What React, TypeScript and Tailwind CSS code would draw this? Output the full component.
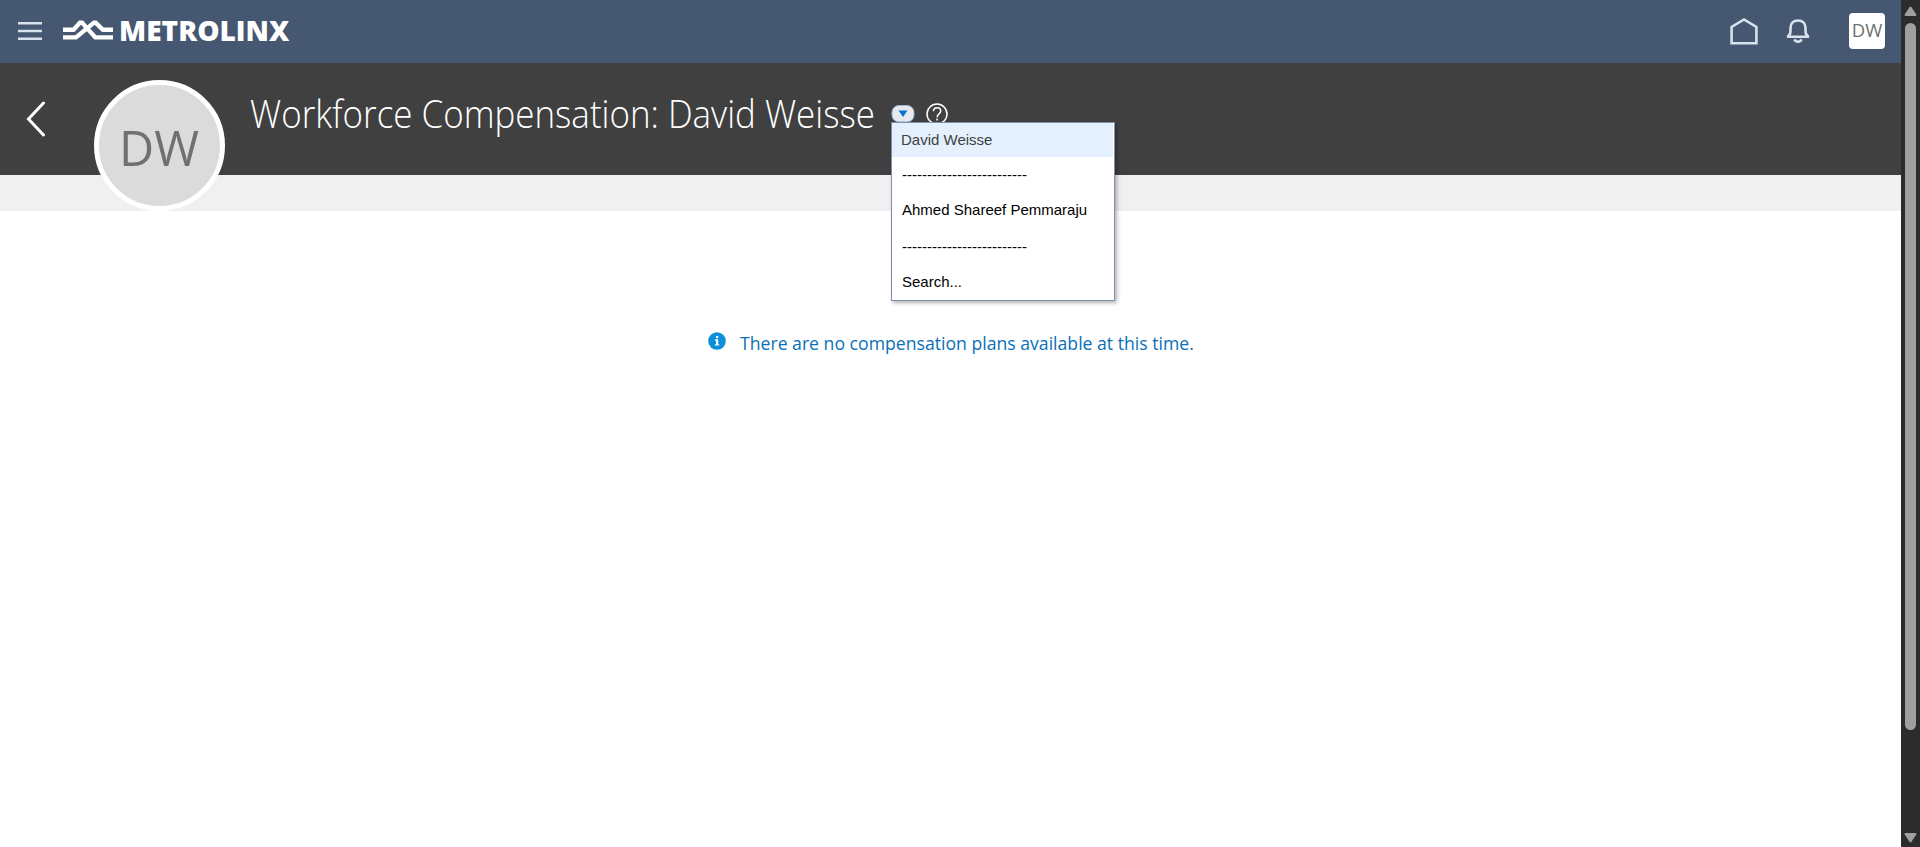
function Logo() {
  return (
    <div className="flex items-center">
      <svg width="50" height="22" viewBox="0 0 50 22" fill="none" stroke="#fff" strokeWidth="4.4" className="-mt-px ml-[21px]">
        <path d="M0 10.800h10.500L17 3.600h2L32.300 18.400H50" />
        <path d="M0 18.400h13L31 3.600h1.600l7.400 7.200H50" />
      </svg>
      <span className="-mt-[2px] ml-[6px] w-[180px] origin-left scale-x-[0.985] whitespace-nowrap font-['Open_Sans'] text-[28.5px] leading-[30px] font-extrabold text-white">
        METROLINX
      </span>
    </div>
  );
}

function TopBar() {
  return (
    <header className="flex h-[63px] items-start bg-[#465771]">
      <div className="flex h-[61px] items-center pl-[18px]">
        <svg width="24" height="20" viewBox="0 0 24 20" fill="#d8e2ee">
          <path d="M0 1h24v2.500H0zM0 8.800h24v2.400H0zM0 16.500h24v2.500H0z" />
        </svg>
        <Logo />
      </div>
      <div className="ml-auto flex h-[62px] items-center pr-4">
        <svg width="28" height="28" viewBox="0 0 28 28" fill="none" stroke="#d8e2ee" strokeWidth="2.600">
          <path d="M1.600 26.200V10L14 2.400l12.400 7.600v16.200z" />
        </svg>
        <svg width="24" height="28" viewBox="0 0 24 28" fill="none" stroke="#d8e2ee" strokeWidth="2.600" className="ml-[28px]">
          <path d="M2.200 19.800h19.600v-.8c-1.600-1-2.300-2.400-2.300-5V11c0-5-3-7.500-7.500-7.500S4.500 6 4.500 11v3c0 2.600-.7 4-2.300 5z" />
          <path d="M8.400 22.400c.8 1.700 1.900 2.300 3.600 2.300s2.800-.6 3.600-2.300" />
        </svg>
        <div className="ml-[39px] flex size-9 items-center justify-center rounded-[4px] bg-white pb-px font-['Open_Sans'] text-[18.500px] leading-none text-[#707070]">
          DW
        </div>
      </div>
    </header>
  );
}

function PersonMenu() {
  const row = "flex items-center pl-[10px]";
  return (
    <div className="absolute top-[59px] left-[891px] z-20 h-[179px] w-[224px] border border-[#7a93a8] bg-white font-['Liberation_Sans'] text-[15px] leading-[18px] whitespace-pre text-black shadow-[2px_2px_4px_rgba(0,0,0,0.3)]">
      <div className="mr-px flex h-[34px] items-center bg-[#e4f0fd] pl-[9px] text-[#404040]">David Weisse</div>
      <div className={row + " h-[36px]"}>-------------------------</div>
      <div className={row + " h-[34px]"}>Ahmed Shareef Pemmaraju</div>
      <div className={row + " h-[40px]"}>-------------------------</div>
      <div className={row + " h-[30px]"}>Search...</div>
    </div>
  );
}

function PageHeader() {
  return (
    <section className="relative h-[148px] bg-[#f0f0f0]">
      <div className="flex h-[112px] items-start bg-[#404040]">
        <svg width="20" height="36" viewBox="0 0 20 36" fill="none" stroke="#fff" strokeWidth="3" className="mt-[38px] ml-[26px]" strokeLinecap="round" strokeLinejoin="miter">
          <path d="M17.500 2 2.500 18l15 16" />
        </svg>
        <div className="relative z-10 mt-[17px] ml-[48px] flex size-[131px] shrink-0 items-center justify-center rounded-full border-[5px] border-white bg-[#dbdbdb] pt-[3px] font-['Open_Sans'] text-[50px] leading-none text-[#707070]">
          <span className="origin-left scale-x-[0.97] pl-[2px]">DW</span>
        </div>
        <h1 className="mt-[24px] ml-[25px] w-[631px] origin-left scale-x-[0.919] font-['Open_Sans'] text-[38px] leading-[52px] font-light whitespace-nowrap text-white">
          Workforce Compensation: David Weisse
        </h1>
        <svg width="24" height="18" viewBox="0 0 24 18" className="mt-[42px] ml-[10px]">
          <rect x="1" y=".5" width="22" height="16.500" rx="7" fill="#e6eaee" stroke="#9eb8d0" />
          <path d="M7.500 5.500h9l-4.500 6.500z" fill="#0572ce" />
        </svg>
        <svg width="22" height="22" viewBox="0 0 22 22" className="mt-[40px] ml-[11px]" fill="none" stroke="#fff" strokeWidth="1.500">
          <circle cx="11" cy="11" r="10" />
          <path d="M7.500 8.300c0-2.200 1.500-3.500 3.600-3.500s3.600 1.200 3.600 3.200c0 2.900-3.600 2.800-3.600 6.300M11.100 15.600v1.800" />
        </svg>
      </div>
      <PersonMenu />
    </section>
  );
}

function Scrollbar() {
  return (
    <div className="flex h-full w-[19px] shrink-0 flex-col items-center bg-[#2c2c2c]">
      <svg width="13" height="11" viewBox="0 0 13 11" className="mt-[6px]">
        <path d="M6.500 1.500 11.500 9h-10z" fill="#9f9f9f" stroke="#9f9f9f" strokeWidth="2" strokeLinejoin="round" />
      </svg>
      <div className="mt-[6px] h-[707px] w-[11px] rounded-full bg-[#9f9f9f]" />
      <svg width="13" height="11" viewBox="0 0 13 11" className="mt-auto mb-[4px]">
        <path d="M6.500 9.500 11.500 2h-10z" fill="#9f9f9f" stroke="#9f9f9f" strokeWidth="2" strokeLinejoin="round" />
      </svg>
    </div>
  );
}

export default function App() {
  return (
    <div className="flex h-[847px] w-[1920px] overflow-hidden bg-white">
      <div className="w-[1901px]">
        <TopBar />
        <PageHeader />
        <main className="flex items-start pt-[120px] pl-[708px]">
          <svg width="18" height="18" viewBox="0 0 18 18" className="mt-[1px]">
            <circle cx="9" cy="9" r="8.800" fill="#0a90d8" />
            <path d="M8 4h2.200v2H8zM7 7.300h3.200v4.900h1v1.400H6.900v-1.400H8V8.700H7z" fill="#fff" />
          </svg>
          <p className="-mt-px ml-[14px] origin-left scale-x-[0.928] font-['Open_Sans'] text-[19px] leading-[26px] whitespace-nowrap text-[#0a70b8]">
            There are no compensation plans available at this time.
          </p>
        </main>
      </div>
      <Scrollbar />
    </div>
  );
}
